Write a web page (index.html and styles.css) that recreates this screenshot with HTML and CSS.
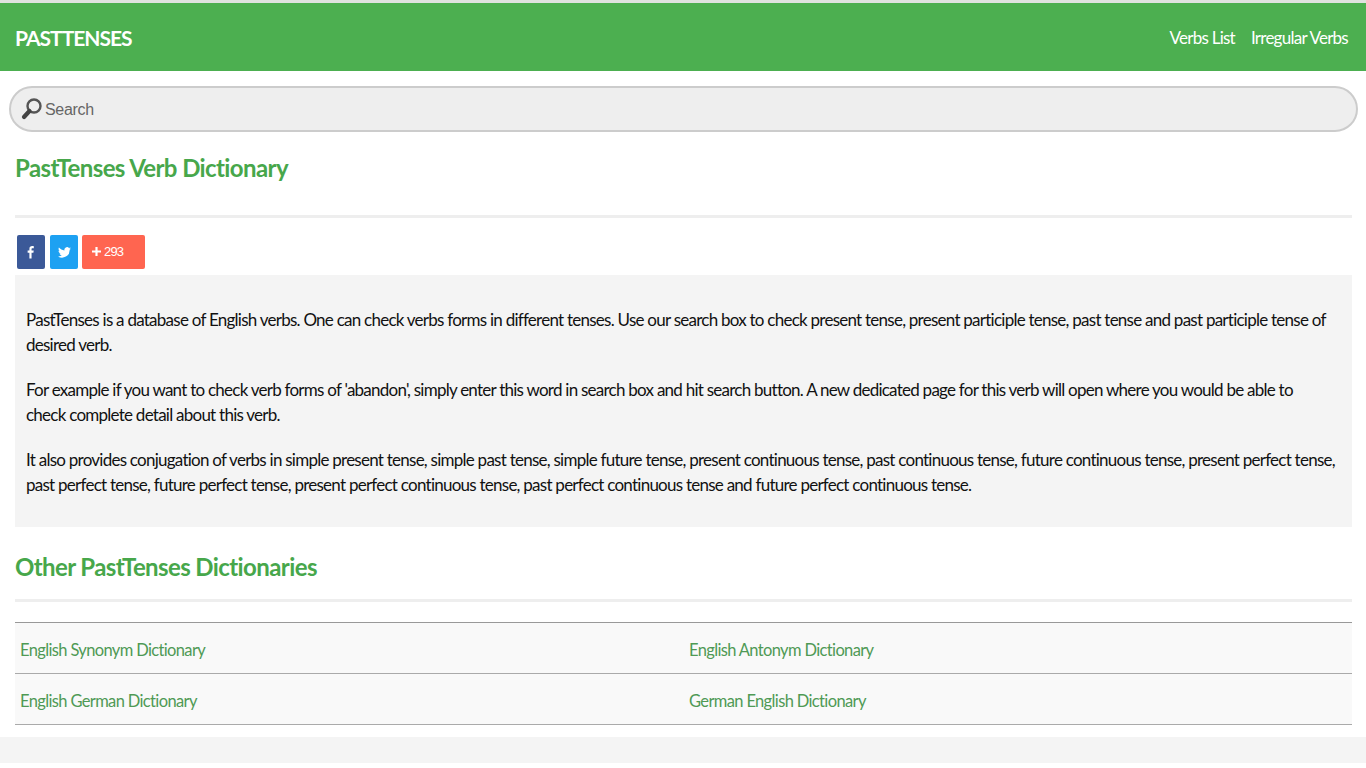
FILE: index.html
```html
<!DOCTYPE html>
<html lang="en">
<head>
<meta charset="utf-8">
<title>PastTenses</title>
<link rel="stylesheet" href="styles.css">
</head>
<body>
<header class="topbar">
  <a class="brand">PASTTENSES</a>
  <nav class="nav"><a>Verbs List</a><a>Irregular Verbs</a></nav>
</header>
<div class="search">
  <svg class="search-icon" width="22" height="24" viewBox="0 0 22 24"><circle cx="13" cy="9" r="6.5" fill="none" stroke="#555" stroke-width="2.4"/><path d="M8.5 14 L3 20" stroke="#444" stroke-width="4.2" stroke-linecap="round"/></svg>
  <span class="search-text">Search</span>
</div>
<main class="content">
  <h1 class="title first">PastTenses Verb Dictionary</h1>
  <hr class="rule">
  <div class="share">
    <a class="btn fb"><svg width="8" height="14" viewBox="0 0 10 16"><path fill="#fff" d="M3 16V9H.8V6.2H3V4.1C3 1.700 4.400.6 6.400.6c1 0 1.800.1 2.100.1v2.500H7c-1.100 0-1.300.5-1.300 1.300v1.700h2.700L8 9H5.700v7z"/></svg></a>
    <a class="btn tw"><svg width="13" height="11" viewBox="0 0 24 20"><path fill="#fff" d="M24 2.400c-.9.400-1.800.7-2.800.8 1-.6 1.800-1.600 2.200-2.700-1 .6-2 1-3.100 1.200A4.900 4.900 0 0 0 11.900 6.100C7.800 5.900 4.200 3.900 1.700.9c-1.300 2.200-.7 5.100 1.500 6.600-.8 0-1.600-.2-2.200-.6 0 2.300 1.600 4.400 3.900 4.900-.7.200-1.500.2-2.200.1.600 2 2.400 3.400 4.600 3.400A9.900 9.900 0 0 1 0 17.300 14 14 0 0 0 21.500 4.900c1-.7 1.800-1.500 2.500-2.500z"/></svg></a>
    <a class="btn plus"><svg width="9" height="9" viewBox="0 0 10 10"><path fill="#fff" d="M3.800 0h2.400v3.800H10v2.400H6.200V10H3.800V6.200H0V3.800h3.800z"/></svg><span class="count">293</span></a>
  </div>
  <section class="panel">
    <p>PastTenses is a database of English verbs. One can check verbs forms in different tenses. Use our search box to check present tense, present participle tense, past tense and past participle tense of desired verb.</p>
    <p>For example if you want to check verb forms of 'abandon', simply enter this word in search box and hit search button. A new dedicated page for this verb will open where you would be able to<br>check complete detail about this verb.</p>
    <p>It also provides conjugation of verbs in simple present tense, simple past tense, simple future tense, present continuous tense, past continuous tense, future continuous tense, present perfect tense, past perfect tense, future perfect tense, present perfect continuous tense, past perfect continuous tense and future perfect continuous tense.</p>
  </section>
  <h2 class="title second">Other PastTenses Dictionaries</h2>
  <hr class="rule">
  <div class="links">
    <a>English Synonym Dictionary</a><a>English Antonym Dictionary</a>
    <a>English German Dictionary</a><a>German English Dictionary</a>
  </div>
</main>
<footer class="footer"></footer>
</body>
</html>
```
FILE: styles.css
```css
* { box-sizing: border-box; }
html, body { margin: 0; padding: 0; }
body { background: #fff; font-family: Lato, "Noto Sans", sans-serif; color: #111; height: 768px; overflow: hidden; border-top: 3px solid #dfe3df; }
.topbar { height: 68px; background: #4caf50; border-top: 1px solid #4caf50; display: flex; justify-content: space-between; align-items: center; padding: 0 18px 0 15px; color: #fff; }
.brand { font-size: 21px; font-weight: 700; letter-spacing: -1px; }
.nav { display: flex; gap: 16px; font-size: 17px; letter-spacing: -0.75px; }
.search { margin: 15px 8px 0 9px; height: 46px; border: 2px solid #ccc; border-radius: 24px; background: #eee; display: flex; align-items: center; padding-left: 10px; gap: 2px; }
.search-icon { flex: none; }
.search-text { font-family: "Liberation Sans", sans-serif; font-size: 16px; letter-spacing: -0.3px; color: #666; padding-top: 2px; }
.content { padding: 0 14px 0 15px; }
.title { margin: 0; color: #47a74b; font-size: 24px; font-weight: 700; letter-spacing: -0.6px; line-height: 32px; }
.first { padding-top: 20px; }
.second { padding-top: 24px; }
.rule { margin: 0; border: 0; height: 3px; background: #eee; }
.first + .rule { margin-top: 31px; }
.second + .rule { margin-top: 16px; }
.share { display: flex; gap: 5px; padding: 17px 0 6px 2px; }
.btn { height: 34px; width: 28px; border-radius: 2px; display: flex; align-items: center; justify-content: center; }
.fb { background: #3b5998; }
.tw { background: #1da1f2; }
.plus { width: 63px; margin-left: -1px; background: #ff6550; justify-content: flex-start; padding: 0 0 2px 10px; gap: 3px; color: #fff; }
.count { font-family: "Liberation Sans", sans-serif; font-size: 13px; letter-spacing: -0.8px; }
.panel { background: #f4f4f4; padding: 32px 11px 19px; font-size: 17px; line-height: 25px; letter-spacing: -0.75px; height: 252px; }
.panel p { margin: 0 0 20px; }
.links { margin-top: 20px; display: grid; grid-template-columns: 669px 1fr; background: #f9f9f9; border-top: 1px solid #999; letter-spacing: -0.64px; }
.links a { height: 51px; display: flex; align-items: center; padding: 3px 0 0 5px; font-size: 16.5px; color: #4f9a55; border-bottom: 1px solid #aaa; }
.footer { margin-top: 12px; height: 26px; background: #f4f4f4; }
```
